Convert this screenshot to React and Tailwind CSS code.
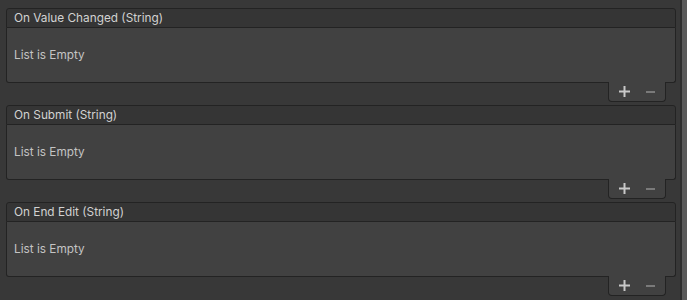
const events = ["On Value Changed (String)", "On Submit (String)", "On End Edit (String)"];

function EventList({ title }) {
  return (
    <div className="mb-[3px] flex flex-col">
      <div className="h-[20px] rounded-t-[3px] border border-[#232323] bg-[#353535] pl-[7px] text-[11.8px] leading-[19px] text-[#d2d2d2]">
        {title}
      </div>
      <div className="flex h-[55px] items-center rounded-b-[3px] border-x border-b border-[#232323] bg-[#414141] pl-[7px] pt-[2px] text-[11.8px] text-[#c4c4c4]">
        List is Empty
      </div>
      <div className="relative -mt-px mr-[10px] flex h-[20px] w-[58px] items-center self-end rounded-b-[4px] border-x border-b border-[#232323] bg-[#414141]">
        <svg className="ml-[10px]" width="11" height="11" viewBox="0 0 11 11">
          <rect x="4.5" y="0" width="2" height="11" fill="#c8c8c8" />
          <rect x="0" y="4.5" width="11" height="2" fill="#c8c8c8" />
        </svg>
        <svg className="ml-[16px]" width="9" height="2" viewBox="0 0 9 2">
          <rect x="0" y="0" width="9" height="2" fill="#7a7a7a" />
        </svg>
      </div>
    </div>
  );
}

export default function App() {
  return (
    <div className="flex h-[300px] w-[687px] overflow-hidden bg-[#383838] font-['Inter',sans-serif]">
      <div className="flex-1 pl-[6px] pr-[4px] pt-[8px]">
        {events.map((e) => (
          <EventList key={e} title={e} />
        ))}
      </div>
      <div className="w-[2px] bg-[#2e2e2e]" />
      <div className="w-[5px] bg-[#5a5a5a]" />
    </div>
  );
}
